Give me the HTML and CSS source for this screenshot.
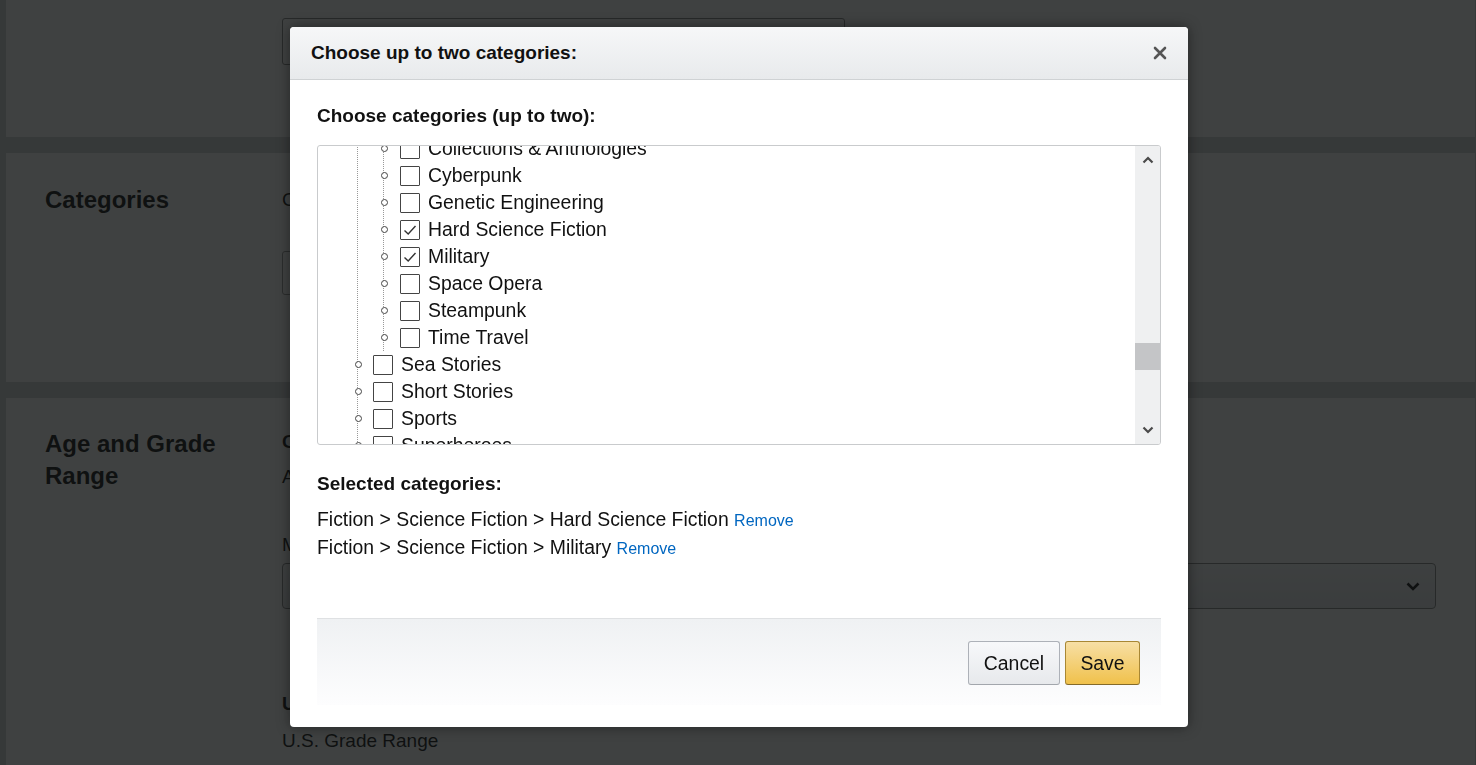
FILE: index.html
```html
<!DOCTYPE html>
<html lang="en">
<head>
<meta charset="utf-8">
<title>Choose up to two categories</title>
<link rel="stylesheet" href="styles.css">
</head>
<body>
<div class="page">
  <section class="sec sec-top">
    <div class="col-head"></div>
    <div class="col-body">
      <div class="input-box"></div>
    </div>
  </section>
  <section class="sec sec-cat">
    <h2 class="col-head">Categories</h2>
    <div class="col-body">
      <p class="bg-text">Choose up to two browse categories for your book.</p>
      <div class="bg-button">Set categories</div>
    </div>
  </section>
  <section class="sec sec-age">
    <h2 class="col-head">Age and Grade Range</h2>
    <div class="col-body">
      <p class="bg-text bold">Children's book age range</p>
      <p class="bg-text gap-a">Age range (optional)</p>
      <p class="bg-text gap-n">Minimum</p>
      <div class="bg-select">
        <svg class="bg-chev" width="14" height="9" viewBox="0 0 14 9"><path d="M1.5 1.5 L7 7 L12.5 1.5" fill="none" stroke="#111" stroke-width="2.6"/></svg>
      </div>
      <p class="bg-text bold gap-u">U.S. Grade Range (optional)</p>
      <p class="bg-text gap-us">U.S. Grade Range</p>
    </div>
  </section>
</div>

<div class="overlay"></div>

<div class="modal" role="dialog">
  <div class="modal-header">
    <h1 class="modal-title">Choose up to two categories:</h1>
    <button class="close-btn" aria-label="Close">
      <svg width="14" height="14" viewBox="0 0 14 14"><path d="M2 2 L12 12 M12 2 L2 12" stroke="#555" stroke-width="2.6" stroke-linecap="round"/></svg>
    </button>
  </div>
  <div class="modal-body">
    <div class="label">Choose categories (up to two):</div>
    <div class="tree-box">
      <div class="tree-pane">
        <ul class="tree l1">
          <li>
            <ul class="tree l2">
              <li class="row"><span class="dot"></span><span class="cb"></span><span class="txt">Collections &amp; Anthologies</span></li>
              <li class="row"><span class="dot"></span><span class="cb"></span><span class="txt">Cyberpunk</span></li>
              <li class="row"><span class="dot"></span><span class="cb"></span><span class="txt">Genetic Engineering</span></li>
              <li class="row"><span class="dot"></span><span class="cb checked"><svg width="18" height="18" viewBox="0 0 18 18"><path d="M3.5 9.5 L7.2 13 L14.5 5" fill="none" stroke="#333" stroke-width="1.4"/></svg></span><span class="txt">Hard Science Fiction</span></li>
              <li class="row"><span class="dot"></span><span class="cb checked"><svg width="18" height="18" viewBox="0 0 18 18"><path d="M3.5 9.5 L7.2 13 L14.5 5" fill="none" stroke="#333" stroke-width="1.4"/></svg></span><span class="txt">Military</span></li>
              <li class="row"><span class="dot"></span><span class="cb"></span><span class="txt">Space Opera</span></li>
              <li class="row"><span class="dot"></span><span class="cb"></span><span class="txt">Steampunk</span></li>
              <li class="row"><span class="dot"></span><span class="cb"></span><span class="txt">Time Travel</span></li>
            </ul>
          </li>
          <li class="row"><span class="dot"></span><span class="cb"></span><span class="txt">Sea Stories</span></li>
          <li class="row"><span class="dot"></span><span class="cb"></span><span class="txt">Short Stories</span></li>
          <li class="row"><span class="dot"></span><span class="cb"></span><span class="txt">Sports</span></li>
          <li class="row"><span class="dot"></span><span class="cb"></span><span class="txt">Superheroes</span></li>
          <li class="row"><span class="dot"></span><span class="cb"></span><span class="txt">Thrillers &amp; Suspense</span></li>
        </ul>
      </div>
      <div class="scrollbar">
        <div class="sb-btn">
          <svg width="12" height="8" viewBox="0 0 12 8"><path d="M1.5 6.5 L6 2 L10.5 6.5" fill="none" stroke="#4a4a4a" stroke-width="2.2"/></svg>
        </div>
        <div class="sb-track"><div class="sb-thumb"></div></div>
        <div class="sb-btn">
          <svg width="12" height="8" viewBox="0 0 12 8"><path d="M1.5 1.5 L6 6 L10.5 1.5" fill="none" stroke="#4a4a4a" stroke-width="2.2"/></svg>
        </div>
      </div>
    </div>

    <div class="selected-head">Selected categories:</div>
    <div class="selected-line">Fiction &gt; Science Fiction &gt; Hard Science Fiction <a href="#" class="remove">Remove</a></div>
    <div class="selected-line">Fiction &gt; Science Fiction &gt; Military <a href="#" class="remove">Remove</a></div>

    <div class="modal-footer">
      <button class="btn btn-cancel">Cancel</button>
      <button class="btn btn-save">Save</button>
    </div>
  </div>
</div>
</body>
</html>
```

FILE: styles.css
```css
* { box-sizing: border-box; }

html, body {
  margin: 0;
  padding: 0;
  height: 100%;
  overflow: hidden;
}

body {
  background: #d2d4d6;
  font-family: "Liberation Sans", Arial, sans-serif;
  color: #111;
}

/* ---------- background page ---------- */
.page {
  padding: 0 1px 0 6px;
  display: flex;
  flex-direction: column;
  gap: 16px;
}

.sec {
  background: #fff;
  display: grid;
  grid-template-columns: 237px 1fr;
  padding: 0 34px 0 39px;
}

.sec-top { height: 137px; padding-top: 18px; }
.sec-cat { height: 229px; padding-top: 31px; }
.sec-age { height: 400px; padding-top: 30px; }

.col-head {
  margin: 0;
  font-size: 24px;
  line-height: 32px;
  font-weight: 700;
  color: #111;
}

.col-body { display: flex; flex-direction: column; align-items: flex-start; }

.input-box {
  width: 563px;
  height: 47px;
  border: 1px solid #888;
  border-radius: 3px;
  background: #fff;
}

.bg-text {
  margin: 0;
  font-size: 19px;
  line-height: 28px;
  color: #111;
}
.bg-text.bold { font-weight: 700; }
.sec-cat .bg-text { margin-top: 2px; }
.gap-a { margin-top: 7px; }
.gap-n { margin-top: 40px; }
.gap-u { margin-top: 81px; }
.gap-us { margin-top: 9px; }

.bg-button {
  margin-top: 37px;
  height: 44px;
  width: 220px;
  border: 1px solid #999;
  border-radius: 3px;
  font-size: 19px;
  line-height: 42px;
  padding: 0 14px;
}

.bg-select {
  margin-top: 4px;
  width: 1154px;
  height: 46px;
  border: 1px solid #888;
  border-radius: 4px;
  background: linear-gradient(#f7f8fa, #e7e9ec);
  display: flex;
  align-items: center;
  justify-content: flex-end;
  padding-right: 15px;
}

.overlay {
  position: fixed;
  inset: 0;
  background: rgba(15, 17, 17, 0.8);
}

/* ---------- modal ---------- */
.modal {
  position: fixed;
  left: 290px;
  top: 27px;
  width: 898px;
  height: 700px;
  background: #fff;
  border-radius: 4px;
  box-shadow: 0 0 14px rgba(0, 0, 0, 0.45);
  display: flex;
  flex-direction: column;
  overflow: hidden;
}

.modal-header {
  height: 53px;
  flex: none;
  background: linear-gradient(#f6f7f8, #e8eaec);
  border-bottom: 1px solid #cfd2d4;
  display: flex;
  align-items: center;
  justify-content: space-between;
  padding: 0 16px 0 21px;
}

.modal-title {
  margin: 0;
  font-size: 19px;
  font-weight: 700;
  line-height: 24px;
  color: #111;
}

.close-btn {
  border: 0;
  background: none;
  padding: 0;
  width: 24px;
  height: 24px;
  display: flex;
  align-items: center;
  justify-content: center;
  cursor: pointer;
}

.modal-body {
  padding: 24px 27px 0 27px;
  display: flex;
  flex-direction: column;
}

.label {
  font-size: 19px;
  font-weight: 700;
  line-height: 24px;
  margin-bottom: 17px;
}

/* ---------- tree ---------- */
.tree-box {
  height: 300px;
  flex: none;
  border: 1px solid #c9cbcd;
  border-radius: 3px;
  display: flex;
  overflow: hidden;
}

.tree-pane {
  flex: 1;
  overflow: hidden;
}

.tree {
  list-style: none;
  margin: 0;
  padding: 0;
  border-left: 1px dotted #999;
}

.tree.l1 {
  margin: -11px 0 0 39px;
}

.tree.l2 {
  margin-left: 25px;
}

.row {
  height: 27px;
  display: flex;
  align-items: center;
  font-size: 19.4px;
  color: #111;
  white-space: nowrap;
}

.dot {
  width: 7px;
  height: 7px;
  margin-left: -3px;
  border: 1px solid #444;
  border-radius: 50%;
  background: #fff;
  flex: none;
}

.cb {
  width: 20px;
  height: 20px;
  margin-left: 12px;
  border: 1px solid #444;
  border-radius: 1px;
  background: #fff;
  flex: none;
  display: flex;
  align-items: center;
  justify-content: center;
}

.l1 > .row .cb { margin-left: 11px; }

.txt { margin-left: 8px; }

.scrollbar {
  width: 25px;
  flex: none;
  background: #eff0f1;
  display: flex;
  flex-direction: column;
}

.sb-btn {
  height: 28px;
  display: flex;
  align-items: center;
  justify-content: center;
}

.sb-track { flex: 1; }

.sb-thumb {
  margin-top: 169px;
  height: 27px;
  background: #c4c5c7;
}

/* ---------- selected ---------- */
.selected-head {
  margin-top: 27px;
  font-size: 19px;
  font-weight: 700;
  line-height: 24px;
  margin-bottom: 9px;
}

.selected-line {
  height: 28px;
  font-size: 19.4px;
  line-height: 28px;
  color: #111;
}

.remove {
  font-size: 16px;
  line-height: 16px;
  color: #0066c0;
  text-decoration: none;
}

/* ---------- footer ---------- */
.modal-footer {
  margin-top: 57px;
  height: 87px;
  flex: none;
  border-top: 1px solid #dfe1e3;
  background: linear-gradient(#eff1f3, #fdfdfe);
  display: flex;
  justify-content: flex-end;
  align-items: flex-start;
  gap: 5px;
  padding: 22px 21px 0 0;
}

.btn {
  height: 44px;
  border-radius: 3px;
  font-family: "Liberation Sans", Arial, sans-serif;
  font-size: 19.4px;
  color: #111;
  cursor: pointer;
  padding: 0;
}

.btn-cancel {
  width: 92px;
  background: linear-gradient(#f7f8fa, #e7e9ec);
  border: 1px solid #adb1b8;
  border-bottom-color: #a2a6ac;
}

.btn-save {
  width: 75px;
  background: linear-gradient(#f7dfa5, #f0c14b);
  border: 1px solid #a88734;
  border-bottom-color: #846a29;
}
```
